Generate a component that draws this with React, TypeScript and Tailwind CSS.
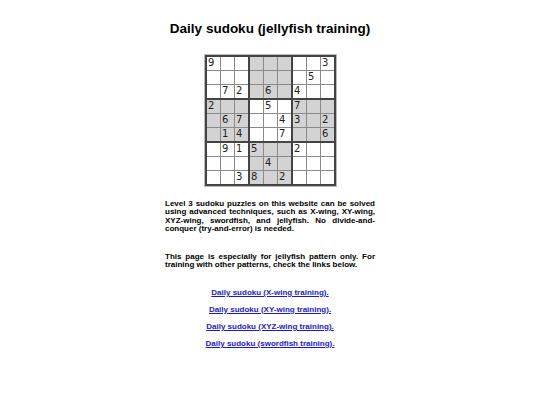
import React from "react";

const puzzle = [
  "9.......3",
  ".......5.",
  ".72.6.4..",
  "2...5.7..",
  ".67..43.2",
  ".14..7..6",
  ".915..2..",
  "....4....",
  "..38.2...",
];

function Box({ br, bc }: { br: number; bc: number }) {
  const gray = (br + bc) % 2 === 1;
  const cells = [];
  for (let r = 0; r < 3; r++) {
    for (let c = 0; c < 3; c++) {
      const ch = puzzle[br * 3 + r][bc * 3 + c];
      cells.push(
        <div
          key={`${r}-${c}`}
          className={`w-[13px] h-[13px] ${gray ? "bg-[#d3d3d3]" : "bg-white"} text-[10px] leading-[12px] pl-[1.5px] text-[#222]`}
          style={{ fontFamily: '"DejaVu Sans", sans-serif' }}
        >
          {ch === "." ? "" : ch}
        </div>
      );
    }
  }
  return <div className="grid grid-cols-3 gap-px bg-[#8a8a8a]">{cells}</div>;
}

export default function App() {
  return (
    <div
      className="w-[540px] h-[405px] bg-white flex flex-col items-center text-black"
      style={{ fontFamily: '"Liberation Sans", Arial, sans-serif' }}
    >
      <h1 className="mt-[20px] text-[13.5px] leading-[18px] font-bold">
        Daily sudoku (jellyfish training)
      </h1>
      <div className="mt-[17px] border-2 border-[#444] outline outline-1 outline-[#bbb]">
        <div className="grid grid-cols-3 gap-[2px] bg-[#444]">
          {[0, 1, 2].map((br) =>
            [0, 1, 2].map((bc) => <Box key={`${br}-${bc}`} br={br} bc={bc} />)
          )}
        </div>
      </div>
      <div className="w-[210px] mt-[14px] text-[8px] leading-[8.3px] font-bold text-justify">
        <p>
          Level 3 sudoku puzzles on this website can be solved using advanced
          techniques, such as X-wing, XY-wing, XYZ-wing, swordfish, and
          jellyfish. No divide-and-conquer (try-and-error) is needed.
        </p>
        <p className="mt-[20px]">
          This page is especially for jellyfish pattern only. For training
          with other patterns, check the links below.
        </p>
      </div>
      <div className="mt-[19px] flex flex-col items-center gap-[8.5px] text-[8px] leading-[8.5px] font-bold">
        <a href="#" className="text-[#1a1acc] underline">Daily sudoku (X-wing training).</a>
        <a href="#" className="text-[#1a1acc] underline">Daily sudoku (XY-wing training).</a>
        <a href="#" className="text-[#1a1acc] underline">Daily sudoku (XYZ-wing training).</a>
        <a href="#" className="text-[#1a1acc] underline">Daily sudoku (swordfish training).</a>
      </div>
    </div>
  );
}
